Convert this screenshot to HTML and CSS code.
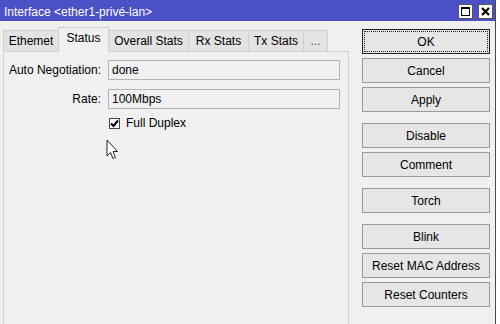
FILE: index.html
```html
<!DOCTYPE html>
<html lang="en">
<head>
    <meta charset="UTF-8">
    <title>Interface &lt;ether1-privé-lan&gt;</title>
    <link rel="stylesheet" href="styles.css">
</head>
<body>
    <div class="window">
        <div class="titlebar">
            <span class="title">Interface &lt;ether1-privé-lan&gt;</span>
            <div class="title-buttons">
                <span class="tb-btn">
                    <svg width="13" height="13" viewBox="0 0 13 13">
                        <rect x="2.5" y="2.5" width="8" height="8" fill="none" stroke="#000" stroke-width="1"/>
                        <rect x="2" y="2" width="9" height="2" fill="#000"/>
                    </svg>
                </span>
                <span class="tb-btn">
                    <svg width="13" height="13" viewBox="0 0 13 13">
                        <path d="M3 3 L10 10 M10 3 L3 10" stroke="#000" stroke-width="2.2"/>
                    </svg>
                </span>
            </div>
        </div>
        <div class="content">
            <div class="left">
                <div class="tabs">
                    <div class="tab tab-eth">Ethemet</div>
                    <div class="tab tab-status active">Status</div>
                    <div class="tab tab-overall">Overall Stats</div>
                    <div class="tab tab-rx">Rx Stats</div>
                    <div class="tab tab-tx">Tx Stats</div>
                    <div class="tab tab-more">...</div>
                </div>
                <div class="tab-body">
                    <div class="form">
                        <label class="lbl">Auto Negotiation:</label>
                        <div class="field">done</div>
                        <label class="lbl">Rate:</label>
                        <div class="field">100Mbps</div>
                        <span></span>
                        <div class="check">
                            <span class="box">
                                <svg width="9" height="9" viewBox="0 0 9 9">
                                    <path d="M1 4.5 L3.5 7 L8 1.5" fill="none" stroke="#000" stroke-width="2"/>
                                </svg>
                            </span>
                            Full Duplex
                        </div>
                    </div>
                </div>
            </div>
            <div class="actions">
                <div class="group">
                    <button class="focused">OK</button>
                    <button>Cancel</button>
                    <button>Apply</button>
                </div>
                <div class="group">
                    <button>Disable</button>
                    <button>Comment</button>
                </div>
                <div class="group">
                    <button>Torch</button>
                </div>
                <div class="group">
                    <button>Blink</button>
                    <button>Reset MAC Address</button>
                    <button>Reset Counters</button>
                </div>
            </div>
        </div>
        <svg class="cursor" width="13" height="21" viewBox="0 0 13 21">
            <path d="M1 1 L1 17 L4.5 13.5 L7 19.5 L9.5 18.5 L7 12.5 L11.5 12.5 Z" fill="#fff" stroke="#222" stroke-width="1" stroke-linejoin="round"/>
        </svg>
    </div>
</body>
</html>
```

FILE: styles.css
```css
body {
    margin: 0;
    background: #fff;
    font-family: "Liberation Sans", Arial, sans-serif;
    font-size: 12px;
    color: #000;
    overflow: hidden;
}
.window {
    position: relative;
    width: 495px;
    height: 324px;
    background: #f0f0f0;
    border-right: 1px solid #4a4a4a;
    display: flex;
    flex-direction: column;
}
.titlebar {
    height: 21px;
    background: #4b50c6;
    color: #fff;
    display: flex;
    justify-content: space-between;
    box-sizing: border-box;
}
.title {
    padding: 3px 0 0 4px;
    line-height: 18px;
}
.title-buttons {
    display: flex;
    gap: 5px;
    padding: 4px 2px 0 0;
}
.tb-btn {
    width: 15px;
    height: 15px;
    background: #fff;
    border: 1px solid #555;
    box-sizing: border-box;
    display: flex;
    align-items: center;
    justify-content: center;
}
.content {
    flex: 1;
    display: flex;
    gap: 13px;
}
.left {
    width: 346px;
    margin-left: 3px;
    display: flex;
    flex-direction: column;
    padding-top: 6px;
}
.tabs {
    display: flex;
    align-items: flex-end;
    height: 24px;
    position: relative;
    z-index: 1;
}
.tab {
    height: 21px;
    line-height: 20px;
    box-sizing: border-box;
    text-align: center;
    background: #e3e3e3;
    border: 1px solid #d0d0d0;
    border-bottom: none;
    margin-right: -1px;
}
.tab.active {
    height: 25px;
    line-height: 21px;
    background: #f0f0f0;
    margin-bottom: -1px;
    position: relative;
}
.tab-eth { width: 56px; }
.tab-status { width: 51px; }
.tab-overall { width: 81px; }
.tab-rx { width: 61px; }
.tab-tx { width: 56px; }
.tab-more { width: 25px; color: #555; }
.tab-body {
    flex: 1;
    border: 1px solid #d0d0d0;
    border-bottom: none;
    padding: 8px 8px 0 0;
}
.form {
    display: grid;
    grid-template-columns: 97px 1fr;
    column-gap: 7px;
    row-gap: 9px;
    align-items: center;
}
.lbl {
    text-align: right;
}
.field {
    height: 20px;
    line-height: 18px;
    box-sizing: border-box;
    border: 1px solid #b4b4b4;
    background: #f0f0f0;
    padding-left: 3px;
}
.check {
    display: flex;
    align-items: center;
    gap: 6px;
    margin-top: -2px;
    padding-left: 1px;
}
.box {
    width: 11px;
    height: 11px;
    box-sizing: border-box;
    border: 1px solid #444;
    background: #fff;
    display: flex;
    align-items: center;
    justify-content: center;
}
.actions {
    width: 128px;
    padding-top: 8px;
    display: flex;
    flex-direction: column;
    gap: 11px;
}
.group {
    display: flex;
    flex-direction: column;
    gap: 4px;
}
button {
    height: 25px;
    font-family: inherit;
    font-size: 12px;
    color: #000;
    background: #e6e6e6;
    border: 1px solid #9a9a9a;
    padding: 0;
    margin: 0;
}
button.focused {
    border-color: #222;
    outline: 1px dotted #222;
    outline-offset: -3px;
}
.cursor {
    position: absolute;
    left: 106px;
    top: 139px;
}
```
